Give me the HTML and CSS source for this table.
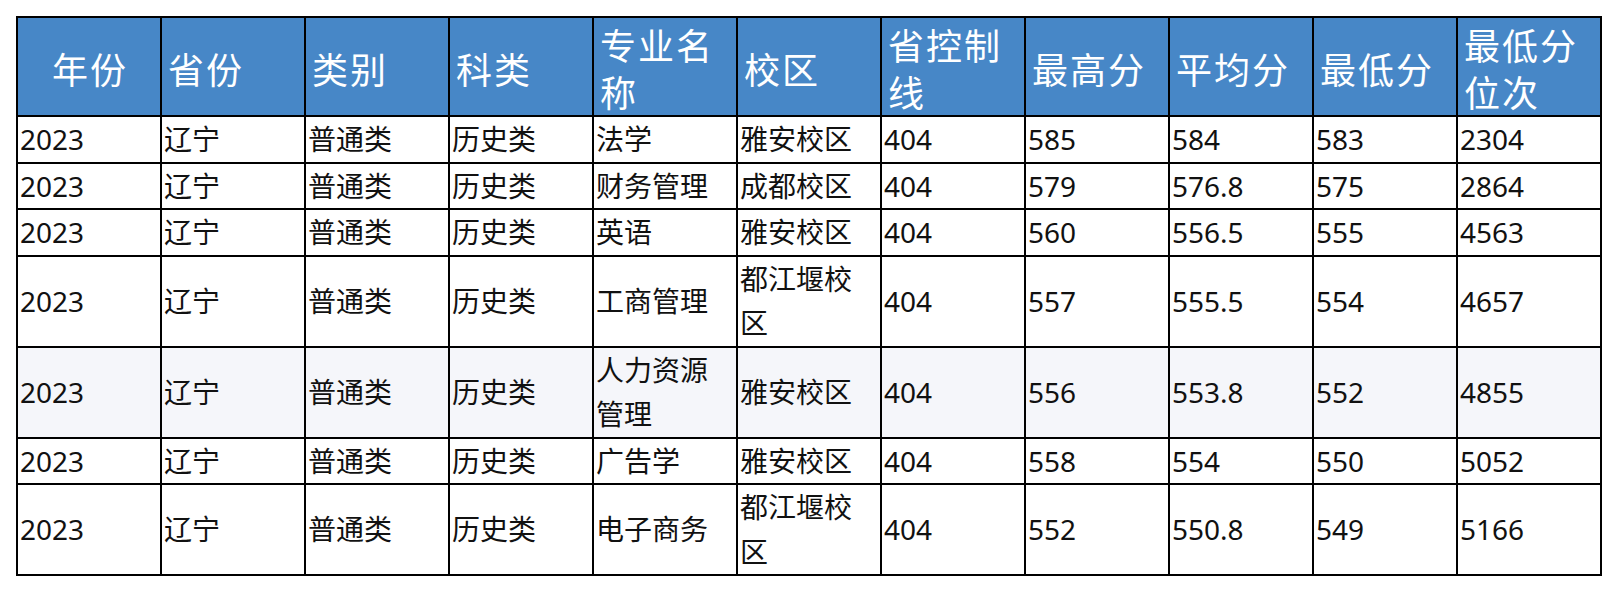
FILE: index.html
```html
<!DOCTYPE html>
<html lang="zh-CN">
<head>
<meta charset="utf-8">
<title>录取分数</title>
<link rel="stylesheet" href="styles.css">
</head>
<body>
<div class="wrap">
<table class="score-table">
  <thead>
    <tr>
      <th class="center">年份</th>
      <th>省份</th>
      <th>类别</th>
      <th>科类</th>
      <th>专业名称</th>
      <th>校区</th>
      <th>省控制线</th>
      <th>最高分</th>
      <th>平均分</th>
      <th>最低分</th>
      <th>最低分位次</th>
    </tr>
  </thead>
  <tbody>
    <tr><td>2023</td><td>辽宁</td><td>普通类</td><td>历史类</td><td>法学</td><td>雅安校区</td><td>404</td><td>585</td><td>584</td><td>583</td><td>2304</td></tr>
    <tr><td>2023</td><td>辽宁</td><td>普通类</td><td>历史类</td><td>财务管理</td><td>成都校区</td><td>404</td><td>579</td><td>576.8</td><td>575</td><td>2864</td></tr>
    <tr><td>2023</td><td>辽宁</td><td>普通类</td><td>历史类</td><td>英语</td><td>雅安校区</td><td>404</td><td>560</td><td>556.5</td><td>555</td><td>4563</td></tr>
    <tr><td>2023</td><td>辽宁</td><td>普通类</td><td>历史类</td><td>工商管理</td><td>都江堰校区</td><td>404</td><td>557</td><td>555.5</td><td>554</td><td>4657</td></tr>
    <tr class="hl"><td>2023</td><td>辽宁</td><td>普通类</td><td>历史类</td><td>人力资源管理</td><td>雅安校区</td><td>404</td><td>556</td><td>553.8</td><td>552</td><td>4855</td></tr>
    <tr><td>2023</td><td>辽宁</td><td>普通类</td><td>历史类</td><td>广告学</td><td>雅安校区</td><td>404</td><td>558</td><td>554</td><td>550</td><td>5052</td></tr>
    <tr><td>2023</td><td>辽宁</td><td>普通类</td><td>历史类</td><td>电子商务</td><td>都江堰校区</td><td>404</td><td>552</td><td>550.8</td><td>549</td><td>5166</td></tr>
  </tbody>
</table>
</div>
</body>
</html>
```
FILE: styles.css
```css
html, body {
  margin: 0;
  padding: 0;
  background: #ffffff;
}

.wrap {
  padding: 16px;
}

.score-table {
  width: 1586px;
  table-layout: fixed;
  border-collapse: collapse;
  border: 2px solid #000;
  font-family: "Noto Sans", "Noto Sans CJK SC", sans-serif;
  color: #111;
}

.score-table th,
.score-table td {
  border: 2px solid #000;
  vertical-align: middle;
  text-align: left;
}

.score-table th {
  background: #4787c7;
  color: #ffffff;
  font-family: "Noto Sans CJK SC", sans-serif;
  font-weight: 400;
  font-size: 36px;
  line-height: 47px;
  letter-spacing: 2px;
  padding: 3px 4px 0 6px;
}

.score-table th.center {
  text-align: center;
}

.score-table td {
  font-size: 28px;
  line-height: 44.5px;
  padding: 0 2px;
}

.score-table tr.hl td {
  background: #f5f6fa;
}
```
